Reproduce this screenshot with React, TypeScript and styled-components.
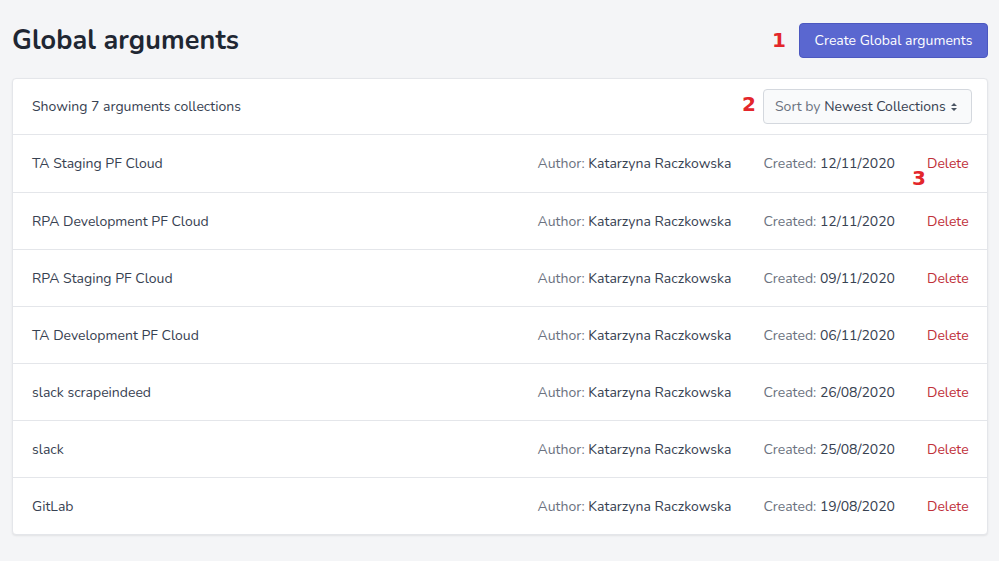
import React from "react";
import styled, { createGlobalStyle } from "styled-components";

const Global = createGlobalStyle`
  html, body { margin: 0; padding: 0; background: #f4f5f7; }
  body { font-family: "Nunito", "Lato", "Noto Sans", sans-serif; color: #374151; }
  * { box-sizing: border-box; }
`;

const Page = styled.div`
  position: relative;
  padding: 23px 11px 27px 12px;
  min-height: 561px;
`;

const Header = styled.div`
  display: flex;
  align-items: center;
  justify-content: space-between;
  height: 35px;
  margin-bottom: 20px;
`;

const Title = styled.h1`
  margin: 0;
  font-size: 27px;
  font-weight: 700;
  color: #1f2733;
  letter-spacing: 0.1px;
`;

const PrimaryButton = styled.button`
  height: 35px;
  width: 189px;
  border: 1px solid #4c58c0;
  border-radius: 4px;
  background: #5a67d0;
  color: #fff;
  font-family: inherit;
  font-size: 14px;
  cursor: pointer;
`;

const Card = styled.div`
  background: #fff;
  border: 1px solid #e4e6ea;
  border-radius: 4px;
  box-shadow: 0 1px 2px rgba(0, 0, 0, 0.08);
`;

const CardHeader = styled.div`
  display: flex;
  align-items: center;
  justify-content: space-between;
  height: 56px;
  padding: 0 15px 0 19px;
  border-bottom: 1px solid #e4e6ea;
  font-size: 14px;
`;

const SortButton = styled.button`
  display: flex;
  align-items: center;
  justify-content: space-between;
  white-space: nowrap;
  height: 35px;
  width: 209px;
  padding: 0 13px 0 11px;
  border: 1px solid #d4d8de;
  border-radius: 4px;
  background: #f9fafb;
  font-family: inherit;
  font-size: 14px;
  color: #374151;
`;

const Muted = styled.span`
  color: #6b7280;
`;

const Row = styled.div`
  display: flex;
  align-items: center;
  height: 57px;
  padding: 0 20px 0 19px;
  font-size: 14px;
  & + & { border-top: 1px solid #e4e6ea; }
`;

const Name = styled.div`
  flex: 1;
  color: #374151;
`;

const Meta = styled.div`
  color: #374151;
  white-space: nowrap;
  margin-right: 32px;
`;

const DeleteLink = styled.a`
  color: #c0303a;
  width: 40px;
  text-align: right;
  cursor: pointer;
`;

const Marker = styled.span<{ $x: number; $y: number }>`
  position: absolute;
  left: ${(p) => p.$x}px;
  top: ${(p) => p.$y}px;
  font-family: "DejaVu Sans", sans-serif;
  font-weight: 700;
  font-size: 20px;
  line-height: 1;
  color: #e3262b;
`;

const Arrows = () => (
  <svg width="8" height="10" viewBox="0 0 8 10" aria-hidden>
    <path d="M4 1 L7 4 H1 Z M4 9 L1 6 H7 Z" fill="#4b5563" />
  </svg>
);

const rows = [
  ["TA Staging PF Cloud", "12/11/2020"],
  ["RPA Development PF Cloud", "12/11/2020"],
  ["RPA Staging PF Cloud", "09/11/2020"],
  ["TA Development PF Cloud", "06/11/2020"],
  ["slack scrapeindeed", "26/08/2020"],
  ["slack", "25/08/2020"],
  ["GitLab", "19/08/2020"],
];

export default function App() {
  return (
    <>
      <Global />
      <Page>
        <Header>
          <Title>Global arguments</Title>
          <PrimaryButton>Create Global arguments</PrimaryButton>
        </Header>
        <Card>
          <CardHeader>
            <span>Showing 7 arguments collections</span>
            <SortButton>
              <span>
                <Muted>Sort by</Muted> Newest Collections
              </span>
              <Arrows />
            </SortButton>
          </CardHeader>
          {rows.map(([name, date]) => (
            <Row key={name}>
              <Name>{name}</Name>
              <Meta>
                <Muted>Author:</Muted> Katarzyna Raczkowska
              </Meta>
              <Meta>
                <Muted>Created:</Muted> {date}
              </Meta>
              <DeleteLink>Delete</DeleteLink>
            </Row>
          ))}
        </Card>
        <Marker $x={772} $y={30}>1</Marker>
        <Marker $x={742} $y={94}>2</Marker>
        <Marker $x={912} $y={168}>3</Marker>
      </Page>
    </>
  );
}
